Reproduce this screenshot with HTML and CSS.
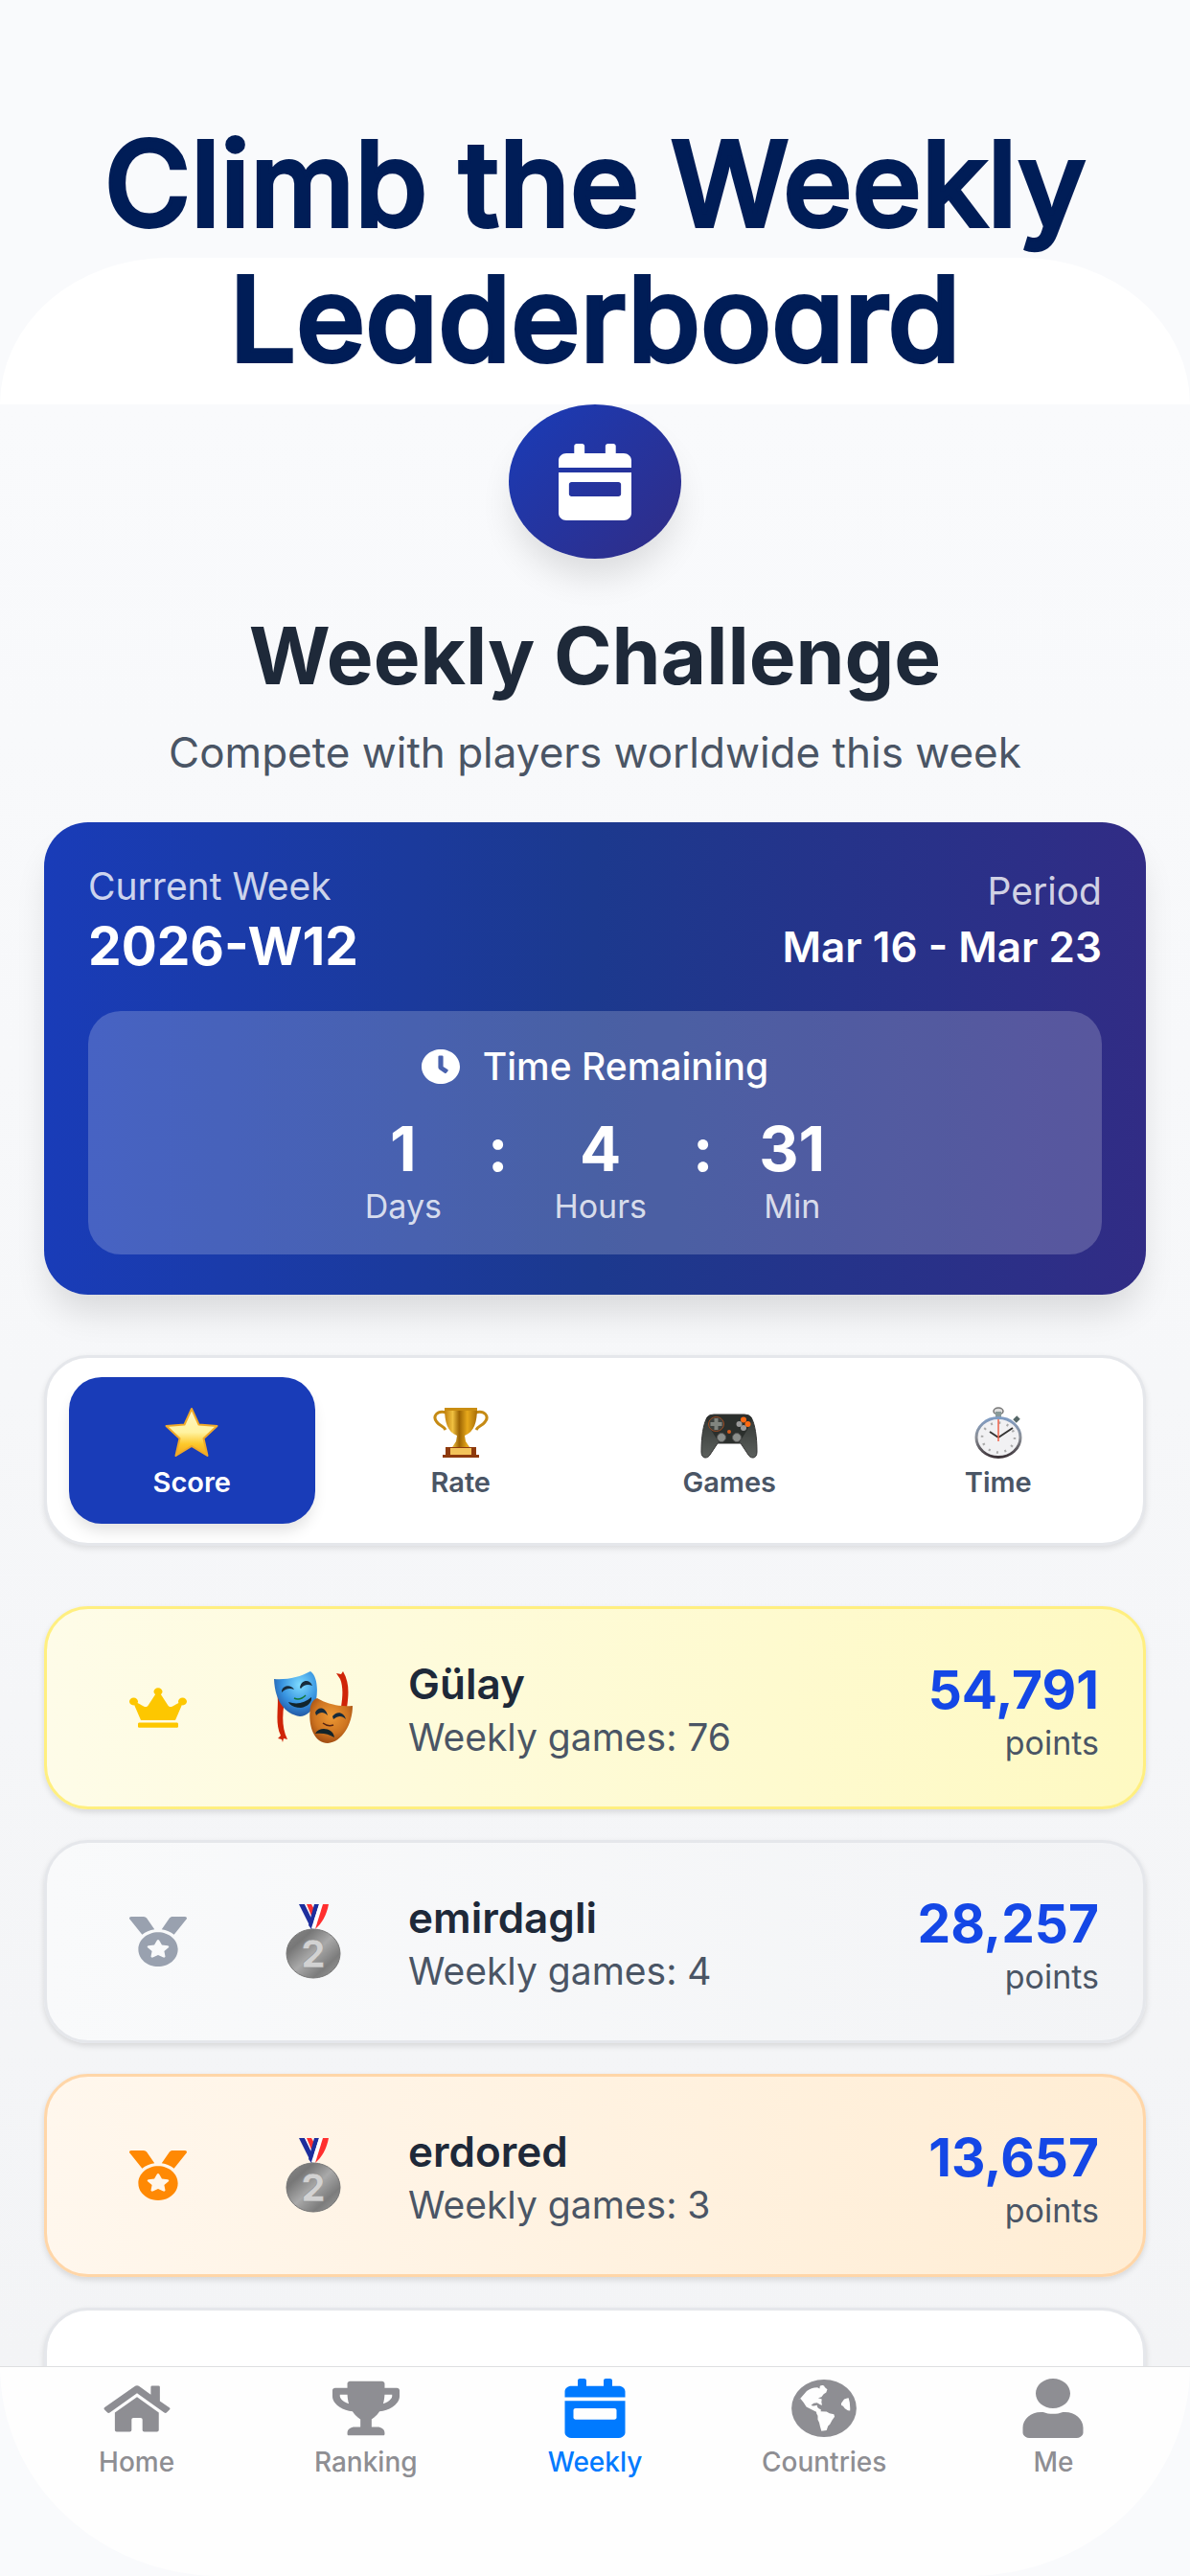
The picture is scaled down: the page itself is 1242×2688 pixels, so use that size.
FILE: index.html
```html
<!DOCTYPE html>
<html lang="en">
<head>
<meta charset="utf-8">
<meta name="viewport" content="width=device-width, initial-scale=1">
<title>Weekly Challenge</title>
<link rel="stylesheet" href="styles.css">
</head>
<body>
<svg class="defs" aria-hidden="true">
  <defs>
    <linearGradient id="gold" x1="0" y1="0" x2="0" y2="1"><stop offset="0" stop-color="#fff6c8"/><stop offset=".5" stop-color="#fff3a0"/><stop offset=".75" stop-color="#fdc92c"/><stop offset="1" stop-color="#f3a51c"/></linearGradient>
    <linearGradient id="cup"><stop offset="0" stop-color="#c07f0c"/><stop offset=".25" stop-color="#f0c040"/><stop offset=".45" stop-color="#9c6403"/><stop offset=".7" stop-color="#e7a91b"/><stop offset="1" stop-color="#a86d06"/></linearGradient>
    <linearGradient id="pad" x1="0" y1="0" x2="0" y2="1"><stop offset="0" stop-color="#303431"/><stop offset="1" stop-color="#5c605d"/></linearGradient>
    <linearGradient id="rim" x1="0" y1="0" x2="0" y2="1"><stop offset="0" stop-color="#7f9cc4"/><stop offset=".5" stop-color="#8b8f96"/><stop offset="1" stop-color="#3c3338"/></linearGradient>
    <radialGradient id="blue" cx=".6" cy=".3" r=".7"><stop offset="0" stop-color="#7fdcff"/><stop offset=".6" stop-color="#3793e0"/><stop offset="1" stop-color="#2359a5"/></radialGradient>
    <radialGradient id="copper" cx=".5" cy=".4" r=".65"><stop offset="0" stop-color="#ee9a35"/><stop offset=".6" stop-color="#ce7420"/><stop offset="1" stop-color="#97440f"/></radialGradient>
    <linearGradient id="silver" x1="0" y1="0" x2="1" y2="1"><stop offset="0" stop-color="#8a8a8a"/><stop offset=".25" stop-color="#777"/><stop offset=".5" stop-color="#a9a9a9"/><stop offset=".75" stop-color="#7c7c7c"/><stop offset="1" stop-color="#a0a0a0"/></linearGradient>
    <symbol id="i-week" viewBox="0 0 448 512" preserveAspectRatio="none"><path d="M0 464c0 26.500 21.500 48 48 48h352c26.500 0 48-21.500 48-48V192H0v272zm64-192c0-8.800 7.200-16 16-16h288c8.800 0 16 7.200 16 16v64c0 8.800-7.200 16-16 16H80c-8.800 0-16-7.200-16-16v-64zM400 64h-48V16c0-8.800-7.200-16-16-16h-32c-8.800 0-16 7.200-16 16v48H160V16c0-8.800-7.200-16-16-16h-32c-8.800 0-16 7.200-16 16v48H48C21.500 64 0 85.500 0 112v48h448v-48c0-26.500-21.500-48-48-48z"/></symbol>
    <symbol id="i-medal" viewBox="0 0 512 512" preserveAspectRatio="none"><path d="M223.750 130.750L154.620 15.540A32 32 0 0 0 127.180 0H16.030C3.080 0-4.500 14.570 2.920 25.180l111.270 158.960c29.720-27.770 67.520-46.830 109.560-53.390zM495.970 0H384.820c-11.240 0-21.660 5.900-27.440 15.540l-69.130 115.210c42.040 6.560 79.840 25.620 109.560 53.380L509.080 25.180C516.500 14.570 508.920 0 495.970 0zM256 160c-97.200 0-176 78.800-176 176s78.800 176 176 176 176-78.800 176-176-78.800-176-176-176zm92.520 157.260l-37.930 36.960 8.970 52.220c1.600 9.360-8.260 16.510-16.650 12.090L256 393.880l-46.900 24.650c-8.400 4.450-18.250-2.740-16.650-12.090l8.970-52.220-37.930-36.960c-6.820-6.640-3.050-18.230 6.350-19.590l52.430-7.640 23.430-47.520c2.110-4.280 6.190-6.390 10.280-6.390 4.110 0 8.220 2.140 10.330 6.390l23.430 47.520 52.430 7.640c9.400 1.360 13.170 12.950 6.350 19.590z"/></symbol>
    <symbol id="i-silver" viewBox="0 0 58 78">
      <path d="M14 0h6l12 20-5 6z" fill="#1d2e9d"/><path d="M20 0h3l8 14-2 5z" fill="#fff"/><path d="M22 0h5l5 9-3 8z" fill="#ff2f2f"/>
      <path d="M30 0h5l-8 26-3-4z" fill="#1d2e9d"/><path d="M35 0h5l-9 25h-4z" fill="#fff"/><path d="M39 0h6c-2 11-7 20-14 26z" fill="#ff2f2f"/>
      <ellipse cx="29" cy="51.500" rx="28" ry="25.500" fill="url(#silver)" stroke="#777"/>
      <text x="29" y="66" text-anchor="middle" font-family="Inter, sans-serif" font-weight="800" font-size="39" fill="#d2d2d2" stroke="#8a8a8a" stroke-width=".5">2</text>
    </symbol>
  </defs>
</svg>

<div class="screen">
  <header class="hero">
    <p class="hero-title">Climb the Weekly Leaderboard</p>
  </header>

  <main class="content">
    <div class="badge"><svg aria-hidden="true"><use href="#i-week"/></svg></div>
    <h1>Weekly Challenge</h1>
    <p class="lead">Compete with players worldwide this week</p>

    <section class="week-card">
      <div class="week-head">
        <div>
          <p class="label">Current Week</p>
          <p class="week-id">2026-W12</p>
        </div>
        <div class="period">
          <p class="label">Period</p>
          <p class="dates">Mar 16 - Mar 23</p>
        </div>
      </div>
      <div class="timer">
        <p class="timer-title">
          <svg viewBox="8 8 496 496" preserveAspectRatio="none" aria-hidden="true"><path d="M256,8C119,8,8,119,8,256S119,504,256,504,504,393,504,256,393,8,256,8Zm92.490,313h0l-20,25a16,16,0,0,1-22.490,2.500h0l-67-49.720a40,40,0,0,1-15-31.230V112a16,16,0,0,1,16-16h32a16,16,0,0,1,16,16V256l58,42.500A16,16,0,0,1,348.490,321Z"/></svg>
          Time Remaining
        </p>
        <div class="clock">
          <div class="unit"><b>1</b><span>Days</span></div>
          <b>:</b>
          <div class="unit"><b>4</b><span>Hours</span></div>
          <b>:</b>
          <div class="unit"><b>31</b><span>Min</span></div>
        </div>
      </div>
    </section>

    <div class="tabs">
      <button class="tab tab-active" type="button">
        <svg viewBox="0 0 60 54" aria-hidden="true"><path d="M30 2l7.500 16.500 19 1.500-14 13 4 18L30 41 13.500 51l4-18-14-13 19-1.500z" fill="url(#gold)" stroke="#f0a928" stroke-width="2" stroke-linejoin="round"/></svg>
        Score
      </button>
      <button class="tab" type="button">
        <svg viewBox="0 0 60 54" aria-hidden="true">
          <path d="M15 6C5 3 0 10 5 16c3 4 7 4 9 8M45 6c10-3 15 4 10 10-3 4-7 4-9 8" fill="none" stroke="#c58a14" stroke-width="3"/>
          <path d="M13 1h34c0 15-3 25-13 29l1 6 4 6H21l4-6 1-6C16 26 13 16 13 1z" fill="url(#cup)"/>
          <path d="M13 1h34v3H13z" fill="#c98d12"/><path d="M14 42h32v8h3v3H11v-3h3z" fill="#8e3a0d"/><path d="M19 43h22v7H19z" fill="#f3c35a"/>
        </svg>
        Rate
      </button>
      <button class="tab" type="button">
        <svg viewBox="0 0 60 54" aria-hidden="true">
          <path d="M7 11q2-3 7-3h32q5 0 7 3c4 7 6 20 6 36 0 8-7 7-9 3l-8-12H18l-8 12c-2 4-9 5-9-3C1 31 3 18 7 11z" fill="url(#pad)" stroke="#333"/>
          <path d="M6 13q1-4 8-4h32q7 0 8 4l-5 11-9 14H20l-9-14z" fill="#2b2f2c"/>
          <ellipse cx="16.500" cy="18" rx="8" ry="7.500" fill="#3d413e" stroke="#9b4a22"/><path d="M14.500 12h4v4h4v4h-4v4h-4v-4h-4v-4h4z" fill="#81857f"/>
          <circle cx="45" cy="13.500" r="3" fill="#ff6a13"/><circle cx="49.500" cy="18" r="3" fill="#ff6a13"/><circle cx="40.500" cy="18" r="3" fill="#999"/><circle cx="45" cy="22" r="3" fill="#999"/>
          <circle cx="22" cy="32" r="4.500" fill="#8b8e8b" stroke="#555"/><circle cx="38" cy="32" r="4.500" fill="#8b8e8b" stroke="#555"/><circle cx="30" cy="26" r="2" fill="#d55b1e"/>
        </svg>
        Games
      </button>
      <button class="tab" type="button">
        <svg viewBox="0 0 60 54" aria-hidden="true">
          <ellipse cx="30" cy="4.500" rx="5" ry="3.500" fill="#ddd" stroke="#777" stroke-width="1.500"/><path d="M27 5h6v6h-6z" fill="#899"/><path d="M47 15l4-4" stroke="#566" stroke-width="5"/>
          <ellipse cx="30" cy="32" rx="23" ry="20.500" fill="#f1f1f3" stroke="url(#rim)" stroke-width="3"/>
          <ellipse cx="30" cy="32" rx="17" ry="15.500" fill="none" stroke="#aaa" stroke-width="2.500" stroke-dasharray="2 6.500"/>
          <path d="M30 32l-9-6M30 32l15-10" stroke="#333" stroke-width="2"/><path d="M30 13v23" stroke="#ef6049" stroke-width="1.500"/>
        </svg>
        Time
      </button>
    </div>

    <ol class="board">
      <li class="row row-gold">
        <svg class="rank" viewBox="0 0 640 640" preserveAspectRatio="none" aria-hidden="true"><path transform="translate(0 64)" d="M528 448H112c-8.800 0-16 7.200-16 16v32c0 8.800 7.200 16 16 16h416c8.800 0 16-7.200 16-16v-32c0-8.800-7.200-16-16-16zm64-320c-26.500 0-48 21.500-48 48 0 7.100 1.600 13.700 4.400 19.800L476 239.200c-15.400 9.200-35.300 4-44.200-11.600L350.300 85C361 76.200 368 63 368 48c0-26.500-21.500-48-48-48s-48 21.500-48 48c0 15 7 28.200 17.700 37l-81.500 142.600c-8.900 15.600-28.900 20.800-44.200 11.600l-72.300-43.400c2.700-6 4.400-12.700 4.400-19.800 0-26.500-21.500-48-48-48S0 149.500 0 176s21.500 48 48 48c2.600 0 5.200-.4 7.700-.8L128 416h384l72.300-192.800c2.500.4 5.100.8 7.700.8 26.500 0 48-21.500 48-48s-21.500-48-48-48z"/></svg>
        <svg class="avatar" viewBox="0 0 84 78" aria-hidden="true">
          <path d="M4 22c3 14-3 32 4 46l-3 3 4 1 1 3 1-4 4 1c-7-14-5-30-2-46z" fill="#cf2407"/><path d="M66 3l5 1 2-3c7 12 6 24 4 38l-6-1c2-12 2-22-1-29z" fill="#cf2407"/>
          <path d="M1 9c14 1 27-2 38-8 7 5 8 18 6 30-2 9-9 17-17 17C14 46 2 34 1 9z" fill="url(#blue)"/>
          <path d="M9 21c2-6 10-6 13-1-5-2-9-1-13 3zM28 18c1-8 10-10 13-2-5-2-9-1-12 3z" fill="#162b3c"/><path d="M22 29q6 3 12-3" fill="none" stroke="#173" stroke-width="1.500"/><path d="M16 33c9 3 17 1 24-5 1 5-4 10-11 11-6 0-11-2-13-6z" fill="#12242b"/>
          <path d="M46 29c12 7 24 9 37 8 0 19-11 38-26 39-15 0-21-20-18-38 1-5 4-8 7-9z" fill="url(#copper)"/>
          <path d="M44 44c3-7 11-6 13 3-4-4-8-4-12 0zM62 48c4-6 12-5 14 3-4-4-8-4-13 0z" fill="#162b3c"/><path d="M52 55q5 4 11 2" fill="none" stroke="#521" stroke-width="1.500"/><path d="M44 66c4-8 19-6 20 4-6-4-13-5-20-4z" fill="#12242b"/>
        </svg>
        <div class="player"><p class="name">Gülay</p><p class="games">Weekly games: 76</p></div>
        <div class="score"><p class="value">54,791</p><p class="unit-name">points</p></div>
      </li>
      <li class="row row-silver">
        <svg class="rank" aria-hidden="true"><use href="#i-medal"/></svg>
        <svg class="avatar" aria-hidden="true"><use href="#i-silver"/></svg>
        <div class="player"><p class="name">emirdagli</p><p class="games">Weekly games: 4</p></div>
        <div class="score"><p class="value">28,257</p><p class="unit-name">points</p></div>
      </li>
      <li class="row row-bronze">
        <svg class="rank" aria-hidden="true"><use href="#i-medal"/></svg>
        <svg class="avatar" aria-hidden="true"><use href="#i-silver"/></svg>
        <div class="player"><p class="name">erdored</p><p class="games">Weekly games: 3</p></div>
        <div class="score"><p class="value">13,657</p><p class="unit-name">points</p></div>
      </li>
      <li class="row"></li>
    </ol>
  </main>

  <nav class="nav">
    <a href="#home">
      <svg viewBox="66 64 190 190" preserveAspectRatio="none" aria-hidden="true"><path d="M154 89q7-5 14 0l31 26V91q0-4 4-4h17q4 0 4 4v45l26 21q4 3 1 6l-8 9q-3 4-7 1l-75-62-75 62q-4 3-7-1l-8-9q-3-4 1-7z"/><path d="M161 123l60 50v56q0 5-5 5h-35q-5 0-5-5v-34q0-5-5-5h-20q-5 0-5 5v34q0 5-5 5h-36q-5 0-5-5v-56z"/></svg>
      Home
    </a>
    <a href="#ranking">
      <svg viewBox="-8 -24 592 560" preserveAspectRatio="none" aria-hidden="true"><path d="M552 64H448V24c0-13.300-10.700-24-24-24H152c-13.300 0-24 10.700-24 24v40H24C10.700 64 0 74.700 0 88v56c0 35.700 22.500 72.400 61.900 100.700 31.500 22.700 69.800 37.100 110 41.700C203.300 338.500 240 360 240 360v72h-48c-35.300 0-64 20.700-64 56v12c0 6.600 5.400 12 12 12h296c6.600 0 12-5.400 12-12v-12c0-35.300-28.700-56-64-56h-48v-72s36.700-21.500 68.100-73.600c40.300-4.600 78.600-19 110-41.700 39.300-28.300 61.900-65 61.900-100.700V88c0-13.300-10.700-24-24-24zM99.300 192.800C74.900 175.200 64 155.600 64 144v-16h64.200c1 32.600 5.800 61.200 12.800 86.200-15.100-5.200-29.200-12.400-41.700-21.400zM512 144c0 16.100-17.700 36.100-35.300 48.800-12.500 9-26.700 16.200-41.800 21.400 7-25 11.800-53.600 12.800-86.200H512v16z"/></svg>
      Ranking
    </a>
    <a class="nav-active" href="#weekly" aria-current="page">
      <svg viewBox="-32 0 512 512" preserveAspectRatio="none" aria-hidden="true"><path d="M0 464c0 26.500 21.500 48 48 48h352c26.500 0 48-21.500 48-48V192H0v272zm64-192c0-8.800 7.200-16 16-16h288c8.800 0 16 7.200 16 16v64c0 8.800-7.200 16-16 16H80c-8.800 0-16-7.200-16-16v-64zM400 64h-48V16c0-8.800-7.200-16-16-16h-32c-8.800 0-16 7.200-16 16v48H160V16c0-8.800-7.200-16-16-16h-32c-8.800 0-16 7.200-16 16v48H48C21.500 64 0 85.500 0 112v48h448v-48c0-26.500-21.500-48-48-48z"/></svg>
      Weekly
    </a>
    <a href="#countries">
      <svg viewBox="692 66 188 187" preserveAspectRatio="none" aria-hidden="true"><path fill-rule="evenodd" d="M786 69a88 90 0 1 0 0 181a88 90 0 1 0 0-181zM721 129l18-24q12-10 29-11l6 4 1-9q4-3 8-2 5 1 5 6l7 7-3 10-7 5-6 9-9 3 10 4-1 10 2 9-5-2-9-6-9 2-7 6q2 3 8 2l8-2q0 8 5 10l6 4-1 5 16 1 8 5 12 3 2 8-7 11-6 13-5 5-4 14-14 2q-4-14-6-26l-4-10v-12l-3-6-1-6-13-8-14-8-8-14-8-12-9 4zM849 128l4-1q5 16 4 40l-6-1-8-6-5-7-5-3v-6l8-13z"/></svg>
      Countries
    </a>
    <a href="#me">
      <svg viewBox="-32 0 512 512" preserveAspectRatio="none" aria-hidden="true"><path d="M224 256c70.700 0 128-57.300 128-128S294.700 0 224 0 96 57.300 96 128s57.300 128 128 128zm89.600 32h-16.700c-22.200 10.200-46.900 16-72.900 16s-50.600-5.800-72.900-16h-16.700C60.200 288 0 348.200 0 422.400V464c0 26.500 21.500 48 48 48h352c26.500 0 48-21.500 48-48v-41.600c0-74.200-60.200-134.400-134.400-134.400z"/></svg>
      Me
    </a>
  </nav>
</div>
</body>
</html>
```

FILE: styles.css
```css
* { box-sizing: border-box; }

body {
  margin: 0;
  background: #f9fafc;
  color: #1e2939;
  font-family: Inter, "Liberation Sans", sans-serif;
}

p, h1, ol { margin: 0; padding: 0; }

.defs { position: absolute; width: 0; height: 0; }

.screen {
  display: flex;
  flex-direction: column;
  height: 100vh;
}

/* Headline */
.hero {
  position: relative;
  padding: 121px 80px 19px;
}

.hero::before {
  content: "";
  position: absolute;
  inset: auto 0 0;
  height: 153px;
  border-radius: 175px 175px 0 0 / 153px 153px 0 0;
  background: #fff;
}

.hero-title {
  position: relative;
  color: #001d57;
  font-size: 123px;
  font-weight: 500;
  font-feature-settings: "cv11";
  line-height: 141px;
  text-align: center;
  -webkit-text-stroke: 4px #001d57;
  stroke-linejoin: round;
}

/* Main content */
.content {
  display: flex;
  flex: 1;
  flex-direction: column;
  min-height: 0;
  overflow: hidden;
  padding: 0 46px;
  background: linear-gradient(#f9fafc, #f3f4f6);
}

.content > * { flex-shrink: 0; }

.badge {
  display: grid;
  place-items: center;
  align-self: center;
  width: 180px;
  height: 161px;
  border-radius: 50%;
  background: linear-gradient(135deg, #193cb8, #312c85);
  box-shadow: 0 24px 36px -6px rgba(0, 0, 0, .12);
}

.badge svg { width: 76px; height: 80px; fill: #fff; }

h1 {
  margin-top: 54px;
  font-size: 82px;
  font-weight: 700;
  line-height: 96px;
  text-align: center;
}

.lead {
  margin-top: 22px;
  color: #4a5565;
  font-size: 44px;
  line-height: 60px;
  text-align: center;
}

.week-card {
  margin-top: 43px;
  padding: 40px 46px 42px;
  border-radius: 46px;
  background: linear-gradient(90deg, #193cb8, #1c398e 50%, #312c85);
  box-shadow: 0 24px 36px -6px rgba(0, 0, 0, .12);
  color: #fff;
}

.week-head {
  display: flex;
  align-items: center;
  justify-content: space-between;
}

.period { text-align: right; }

.label {
  color: rgba(255, 255, 255, .8);
  font-size: 39px;
  line-height: 54px;
}

.week-id { font-size: 55px; font-weight: 700; line-height: 71px; }
.dates { font-size: 44px; font-weight: 600; line-height: 62px; }

.timer {
  margin-top: 32px;
  padding: 32px 32px 30px;
  border-radius: 34px;
  background: rgba(255, 255, 255, .2);
}

.timer-title {
  display: flex;
  align-items: center;
  justify-content: center;
  gap: 24px;
  font-size: 39px;
  font-weight: 500;
  line-height: 52px;
}

.timer-title svg { width: 40px; height: 36px; fill: #fff; }

.clock {
  display: flex;
  justify-content: center;
  gap: 48px;
  margin-top: 21px;
}

.clock b { font-size: 64px; font-weight: 700; line-height: 78px; }

.unit {
  display: flex;
  flex-direction: column;
  align-items: center;
}

.unit span {
  color: rgba(255, 255, 255, .8);
  font-size: 34px;
  line-height: 41px;
}

/* Tabs */
.tabs {
  display: grid;
  grid-template-columns: repeat(4, 1fr);
  gap: 24px;
  margin-top: 63px;
  padding: 20px 23px;
  border: 3px solid #e5e7eb;
  border-radius: 46px;
  background: #fff;
  box-shadow: 0 3px 6px rgba(0, 0, 0, .1);
}

.tab {
  display: flex;
  flex-direction: column;
  align-items: center;
  gap: 7px;
  padding: 31px 0 25px;
  border: 0;
  border-radius: 34px;
  background: none;
  color: #4a5565;
  font: 600 29px/36px Inter, "Liberation Sans", sans-serif;
}

.tab svg { width: 60px; height: 54px; }

.tab-active {
  background: #193cb8;
  box-shadow: 0 10px 16px -3px rgba(0, 0, 0, .12);
  color: #fff;
}

/* Leaderboard */
.board {
  display: flex;
  flex-direction: column;
  gap: 32px;
  margin-top: 63px;
  list-style: none;
}

.row {
  display: flex;
  align-items: center;
  min-height: 212px;
  padding: 0 46px;
  border: 3px solid #e5e7eb;
  border-radius: 46px;
  background: #fff;
  box-shadow: 0 3px 6px rgba(0, 0, 0, .12);
}

.row-gold { border-color: #ffef80; background: linear-gradient(90deg, #fefce8, #fef9c2); }
.row-silver { background: linear-gradient(90deg, #f9fafb, #f3f4f6); }
.row-bronze { border-color: #ffd6a8; background: linear-gradient(90deg, #fff7ed, #ffedd4); }

.rank { width: 60px; height: 52px; margin: 0 80px 0 40px; }
.row-gold .rank { fill: #fdc700; }
.row-silver .rank { fill: #99a1af; }
.row-bronze .rank { fill: #ff8904; }

.avatar { width: 104px; height: 78px; }

.player { flex: 1; padding: 4px 0 0 47px; }
.name { font-size: 44px; font-weight: 600; line-height: 58px; }
.games { color: #4a5565; font-size: 39px; line-height: 54px; }

.score { padding-top: 10px; text-align: right; }
.value { color: #1447e6; font-size: 55px; font-weight: 700; line-height: 64px; }
.unit-name { color: #4a5565; font-size: 34px; line-height: 48px; }

/* Bottom navigation */
.nav {
  display: grid;
  flex-shrink: 0;
  grid-template-columns: repeat(5, 1fr);
  padding: 12px 23px 92px;
  border-top: 1px solid #dedfe1;
  border-radius: 0 0 230px 230px / 0 0 219px 219px;
  background: #fefefe;
}

.nav a {
  display: flex;
  flex-direction: column;
  align-items: center;
  gap: 7px;
  padding-bottom: 9px;
  color: #8e8e93;
  font-size: 28px;
  font-weight: 500;
  line-height: 36px;
  text-decoration: none;
}

.nav svg { width: 72px; height: 62px; fill: currentColor; }
.nav .nav-active { color: #007aff; }
```
